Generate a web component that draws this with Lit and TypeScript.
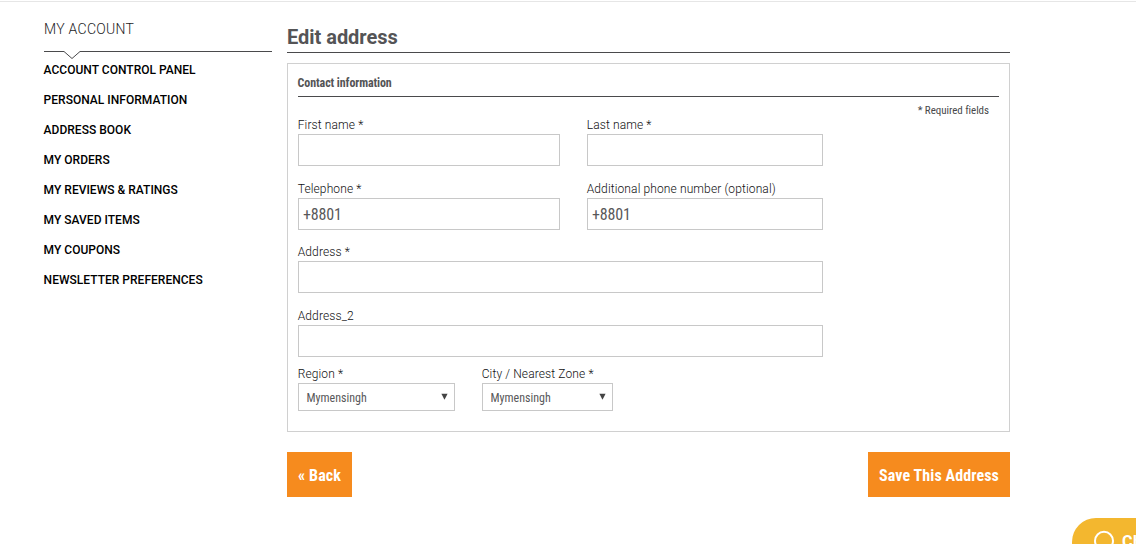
import { LitElement, html, css } from "lit";
import { customElement, property } from "lit/decorators.js";

@customElement("account-nav")
class AccountNav extends LitElement {
  static styles = css`
    :host { display: block; width: 228px; }
    .title { font-size: 14px; line-height: 20px; padding-top: 17px; letter-spacing: 0.28px; color: #1c1c1e; font-weight: 300; }
    .rule { display: block; margin-top: 12px; }
    ul { list-style: none; margin: 0 0 0 -0.4px; padding: 0; }
    li { height: 30px; line-height: 20px; font-size: 12px; font-weight: 500; color: #000; letter-spacing: 0.02px; white-space: nowrap; }
  `;
  items = ["ACCOUNT CONTROL PANEL", "PERSONAL INFORMATION", "ADDRESS BOOK", "MY ORDERS", "MY REVIEWS & RATINGS", "MY SAVED ITEMS", "MY COUPONS", "NEWSLETTER PREFERENCES"];
  render() {
    return html`
      <div class="title">MY ACCOUNT</div>
      <svg class="rule" width="228" height="9" viewBox="0 0 228 9">
        <path d="M0 .5H20L28 7.5L36 .5H228" fill="none" stroke="#4a4a4c" stroke-width="1" />
      </svg>
      <ul>${this.items.map((i) => html`<li>${i}</li>`)}</ul>
    `;
  }
}

@customElement("form-field")
class FormField extends LitElement {
  static styles = css`
    :host { display: block; }
    .label { font-size: 12px; line-height: 18px; height: 18px; color: #101012; font-weight: 300; letter-spacing: 0.12px; text-indent: -0.3px; white-space: nowrap; }
    .box { box-sizing: border-box; height: 32px; border: 1px solid #c8c8c8; padding-left: 4px; font: 400 16px/31px "Roboto Condensed", Roboto, sans-serif; font-stretch: 75%; color: #58585a; letter-spacing: -0.15px; }
    .select { height: 28px; display: flex; justify-content: space-between; padding: 0 6px 0 7.5px; font-size: 12px; line-height: 28px; letter-spacing: 0; }
    .arrow { margin-top: 9px; }
  `;
  @property() label = "";
  @property() value = "";
  @property() kind = "text";
  render() {
    const select = this.kind === "select";
    return html`
      <div class="label">${this.label}</div>
      <div class="box ${select ? "select" : ""}">
        <span>${this.value}</span>
        ${select ? html`<svg class="arrow" width="7" height="7" viewBox="0 0 7 7"><path d="M.4 .8H6.6L3.5 6.8Z" fill="#444" /></svg>` : ""}
      </div>
    `;
  }
}

@customElement("app-root")
class AppRoot extends LitElement {
  static styles = css`
    :host { display: block; position: relative; width: 1136px; height: 544px; overflow: hidden; background: #fff; font-family: Roboto, sans-serif; }
    .topline { height: 1px; margin-top: 1px; background: #e6e6e6; }
    .page { display: flex; gap: 15px; padding-left: 44px; }
    .main { width: 723px; }
    h1 { margin: 0; padding-top: 22px; height: 28px; line-height: 27px; font-size: 20px; font-weight: 700; color: #545456; border-bottom: 1px solid #4a4a4c; letter-spacing: -0.03px; }
    .card { box-sizing: border-box; height: 369px; margin-top: 10px; border: 1px solid #d0d0d0; padding: 9px 10px 0; }
    .cond { font-family: "Roboto Condensed", Roboto, sans-serif; font-stretch: 75%; }
    .legend { height: 23px; line-height: 20px; font-size: 12px; font-weight: 700; color: #545456; border-bottom: 1px solid #4a4a4c; letter-spacing: -0.1px; text-indent: -0.4px; }
    .required { height: 19px; line-height: 27px; text-align: right; padding-right: 10px; font-size: 11px; color: #48484a; letter-spacing: -0.05px; }
    .grid { display: grid; width: 525px; grid-template-columns: 262px 236px; column-gap: 27px; row-gap: 14px; }
    .wide { grid-column: 1 / -1; }
    .grid .wide { margin-top: -1px; }
    .grid .wide + .wide { margin-top: 0; }
    .selects { display: grid; grid-template-columns: 157px 131px; column-gap: 27px; margin-top: 8px; }
    .actions { display: flex; justify-content: space-between; margin-top: 20px; }
    .btn { height: 45px; line-height: 47px; text-align: center; background: #f68b1e; color: #fff; font-size: 16px; font-weight: 700; white-space: nowrap; letter-spacing: 0.1px; }
    .back { width: 65px; }
    .save { width: 142px; }
    .chat { position: absolute; left: 1072px; top: 518px; width: 110px; height: 48px; border-radius: 24px; background: #f3b72f; color: #fff; font-size: 16px; font-weight: 700; }
    .chat svg { position: absolute; left: 21px; top: 12px; }
    .chat span { position: absolute; left: 50px; top: 14px; line-height: 20px; letter-spacing: 0.5px; }
  `;
  render() {
    return html`
      <div class="topline"></div>
      <div class="page">
        <account-nav></account-nav>
        <div class="main">
          <h1>Edit address</h1>
          <div class="card">
            <div class="legend cond">Contact information</div>
            <div class="required cond">* Required fields</div>
            <div class="grid">
              <form-field label="First name *"></form-field>
              <form-field label="Last name *"></form-field>
              <form-field label="Telephone *" value="+8801"></form-field>
              <form-field label="Additional phone number (optional)" value="+8801"></form-field>
              <form-field class="wide" label="Address *"></form-field>
              <form-field class="wide" label="Address_2"></form-field>
            </div>
            <div class="selects">
              <form-field kind="select" label="Region *" value="Mymensingh"></form-field>
              <form-field kind="select" label="City / Nearest Zone *" value="Mymensingh"></form-field>
            </div>
          </div>
          <div class="actions">
            <div class="btn back cond">« Back</div>
            <div class="btn save cond">Save This Address</div>
          </div>
        </div>
      </div>
      <div class="chat">
        <svg width="22" height="22" viewBox="0 0 22 22"><circle cx="11" cy="10.8" r="9" fill="none" stroke="#fff" stroke-width="2" /><path d="M8 19v3l4-3" fill="#fff" /></svg>
        <span>Chat</span>
      </div>
    `;
  }
}
